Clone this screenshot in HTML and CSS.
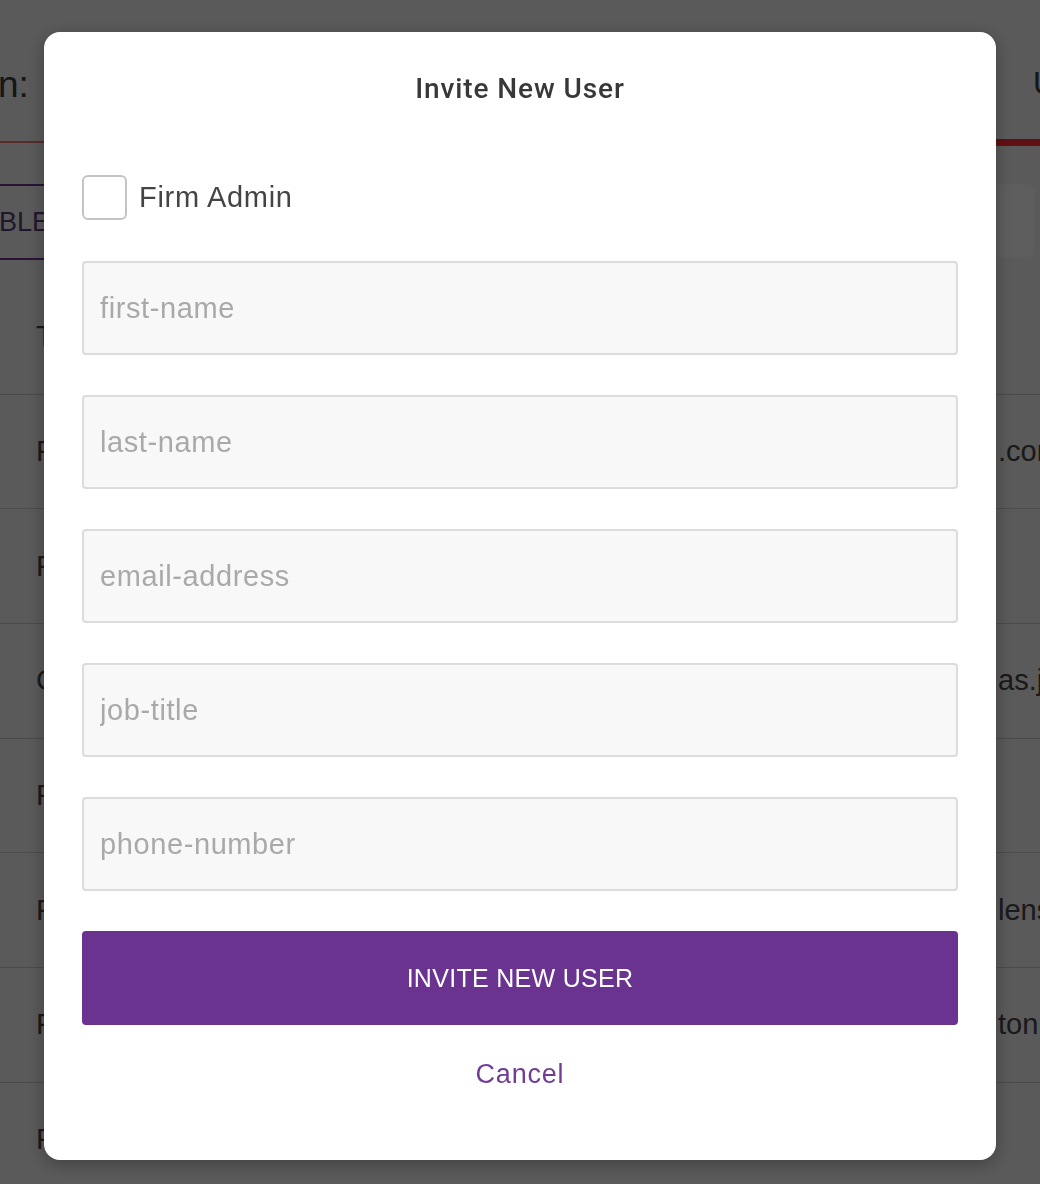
FILE: index.html
```html
<!DOCTYPE html>
<html lang="en">
<head>
<meta charset="utf-8">
<title>Invite New User</title>
<link rel="stylesheet" href="styles.css">
</head>
<body>
<div class="page">
  <header class="topbar">
    <h1 class="page-title">n:</h1>
    <span class="page-tab">U</span>
  </header>
  <div class="tabline"><div class="tabline-rest"></div><div class="tabline-active"></div></div>
  <div class="toolbar">
    <button class="outline-btn">BLE</button>
    <div class="search-box"></div>
  </div>
  <div class="table">
    <div class="row head"><span class="cell-name">Title</span><span class="cell-email"></span></div>
    <div class="row"><span class="cell-name">Frank</span><span class="cell-email">.com</span></div>
    <div class="row"><span class="cell-name">Frida</span><span class="cell-email"></span></div>
    <div class="row"><span class="cell-name">Carl</span><span class="cell-email">as.j</span></div>
    <div class="row"><span class="cell-name">Fred</span><span class="cell-email"></span></div>
    <div class="row"><span class="cell-name">Felix</span><span class="cell-email">lens</span></div>
    <div class="row"><span class="cell-name">Fiona</span><span class="cell-email">ton</span></div>
    <div class="row"><span class="cell-name">Flora</span><span class="cell-email"></span></div>
  </div>
</div>

<div class="overlay">
  <div class="modal">
    <h2 class="modal-title">Invite New User</h2>
    <label class="check-row">
      <span class="checkbox"></span>
      <span class="check-label">Firm Admin</span>
    </label>
    <div class="fields">
      <input class="field" type="text" placeholder="first-name">
      <input class="field" type="text" placeholder="last-name">
      <input class="field" type="text" placeholder="email-address">
      <input class="field" type="text" placeholder="job-title">
      <input class="field" type="text" placeholder="phone-number">
    </div>
    <button class="primary-btn">INVITE NEW USER</button>
    <a class="cancel-link">Cancel</a>
  </div>
</div>
</body>
</html>
```

FILE: styles.css
```css
* { box-sizing: border-box; }
html, body {
  margin: 0;
  padding: 0;
  width: 1040px;
  height: 1184px;
  overflow: hidden;
}
body {
  font-family: "Liberation Sans", Arial, sans-serif;
  background: #ececec;
  color: #444;
}
.page {
  width: 1040px;
}
.topbar {
  height: 138px;
  display: flex;
  justify-content: space-between;
  align-items: flex-start;
  padding-top: 63px;
}
.page-title {
  margin: 0 0 0 -2px;
  font-size: 37px;
  font-weight: 400;
  line-height: 44px;
  color: #3a3a3a;
}
.page-tab {
  font-size: 32px;
  line-height: 40px;
  color: #3a3a3a;
  margin-right: -20px;
  width: 27px;
}
.tabline {
  display: flex;
  height: 8px;
  align-items: flex-end;
}
.tabline-rest {
  flex: 1;
  height: 2px;
  background: #e87070;
  margin-bottom: 3px;
}
.tabline-active {
  width: 60px;
  height: 7px;
  background: #ff2836;
}
.toolbar {
  display: flex;
  justify-content: space-between;
  margin-top: 38px;
  height: 76px;
}
.outline-btn {
  margin-left: -150px;
  width: 220px;
  height: 76px;
  border: 2px solid #6a3390;
  border-radius: 4px;
  background: #ececec;
  color: #5a3a78;
  font-family: "Liberation Sans", Arial, sans-serif;
  font-size: 27px;
  text-align: right;
  padding-right: 18px;
}
.search-box {
  width: 300px;
  margin-right: 5px;
  height: 74px;
  border: 2px solid #f4f4f4;
  border-radius: 8px;
  background: #f6f6f6;
}
.table {
  margin-top: 20px;
}
.row {
  height: 114.7px;
  display: flex;
  align-items: center;
  justify-content: space-between;
  border-bottom: 1.5px solid #c4c4c4;
  font-size: 29px;
  color: #444;
}
.cell-name { padding-left: 36px; }
.cell-email {
  width: 42px;
  white-space: nowrap;
  overflow: visible;
}

.overlay {
  position: fixed;
  inset: 0;
  background: rgba(0, 0, 0, 0.62);
  display: flex;
  justify-content: center;
  align-items: flex-start;
  padding-top: 32px;
}
.modal {
  width: 952px;
  height: 1128px;
  background: #fff;
  border-radius: 16px;
  box-shadow: 0 4px 18px rgba(0, 0, 0, 0.3);
  padding: 41px 38px 0 38px;
  display: flex;
  flex-direction: column;
  font-family: "Liberation Sans", Arial, sans-serif;
}
.modal-title {
  margin: 0;
  text-align: center;
  font-family: Roboto, "Liberation Sans", Arial, sans-serif;
  font-size: 28px;
  line-height: 32px;
  font-weight: 500;
  color: #383838;
  letter-spacing: 0.9px;
}
.check-row {
  margin-top: 70px;
  display: flex;
  align-items: center;
  gap: 12px;
  height: 45px;
}
.checkbox {
  width: 45px;
  height: 45px;
  border: 2px solid #c4c4c4;
  border-radius: 6px;
  background: #fff;
}
.check-label {
  font-size: 29px;
  color: #444;
  letter-spacing: 0.7px;
}
.fields {
  margin-top: 41px;
  display: flex;
  flex-direction: column;
  gap: 40px;
}
.field {
  height: 94px;
  width: 100%;
  border: 2px solid #dcdcdc;
  border-radius: 4px;
  background: #f8f8f8;
  padding: 0 16px;
  font-family: "Liberation Sans", Arial, sans-serif;
  font-size: 29px;
  color: #333;
  outline: none;
}
.field::placeholder {
  color: #a9a9a9;
  letter-spacing: 0.6px;
}
.primary-btn {
  margin-top: 40px;
  height: 94px;
  width: 100%;
  border: none;
  border-radius: 4px;
  background: #6a3390;
  color: #fff;
  font-family: "Liberation Sans", Arial, sans-serif;
  font-size: 25px;
  letter-spacing: 0.3px;
}
.cancel-link {
  margin-top: 34px;
  text-align: center;
  font-size: 27px;
  line-height: 30px;
  color: #6f3d96;
  letter-spacing: 0.8px;
}
```
